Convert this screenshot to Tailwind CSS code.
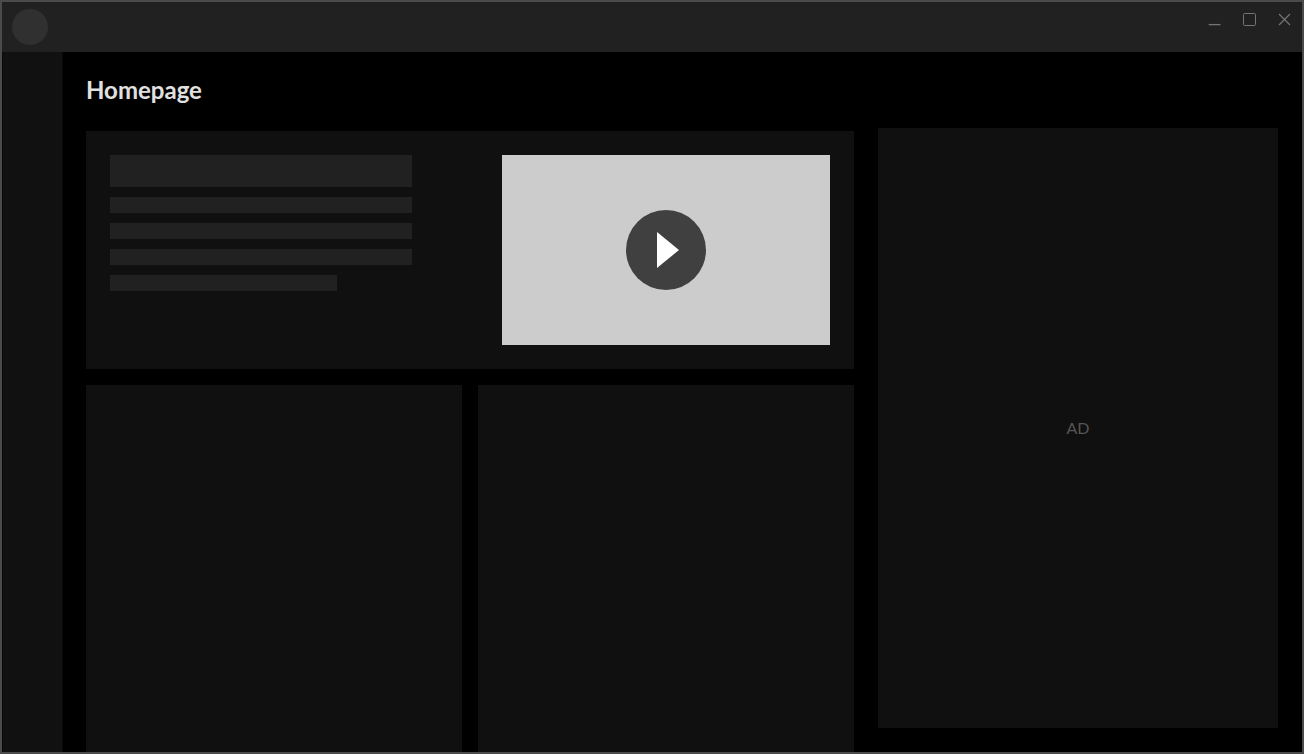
<!DOCTYPE html>
<html lang="en">
<head>
  <meta charset="UTF-8">
  <meta name="viewport" content="width=device-width, initial-scale=1.0">
  <title>Homepage</title>
  <script src="https://cdn.jsdelivr.net/npm/@tailwindcss/browser@4"></script>
</head>
<body class="bg-black font-['Lato',sans-serif]">

  <div class="flex h-screen flex-col overflow-hidden border-2 border-[#4b4b4b]">

    <!-- Title bar -->
    <header class="flex h-[50px] shrink-0 items-start justify-between bg-[#212121] pl-[10px] pt-[7px] pr-2">
      <button aria-label="Profile" class="size-9 rounded-full bg-[#303030]"></button>
      <div class="flex gap-[15px] text-[#757575]">
        <button aria-label="Minimize" class="size-5">
          <svg class="size-5" viewBox="0 0 20 20" fill="none" stroke="currentColor" stroke-width="1.3"><path d="M4.7 15.6h11.8"/></svg>
        </button>
        <button aria-label="Maximize" class="size-5">
          <svg class="size-5" viewBox="0 0 20 20" fill="none" stroke="currentColor"><rect x="4.5" y="4.5" width="12" height="12" rx="1"/></svg>
        </button>
        <button aria-label="Close" class="size-5">
          <svg class="size-5" viewBox="0 0 20 20" fill="none" stroke="currentColor" stroke-width="1.2"><path d="M5 5l11 11M16 5L5 16"/></svg>
        </button>
      </div>
    </header>

    <div class="flex min-h-0 flex-1">
      <!-- Sidebar -->
      <aside class="w-[61px] shrink-0 border-x border-[#090909] bg-[#111111]"></aside>

      <main class="flex min-w-0 flex-1 flex-col pl-[23px] pr-6 pt-6">
        <h1 class="text-2xl leading-7 font-bold text-[#e0e0e0]">Homepage</h1>

        <div class="mt-6 flex min-h-0 flex-1 gap-6">
          <div class="flex min-w-0 flex-1 flex-col gap-4 pt-[3px]">
            <!-- Featured video -->
            <section class="flex justify-between bg-[#101010] p-6">
              <div class="flex w-[302px] flex-col gap-[10px]">
                <div class="h-8 bg-[#212121]"></div>
                <div class="h-4 bg-[#212121]"></div>
                <div class="h-4 bg-[#212121]"></div>
                <div class="h-4 bg-[#212121]"></div>
                <div class="h-4 w-3/4 bg-[#212121]"></div>
              </div>
              <div class="flex h-[190px] w-[328px] items-center justify-center bg-[#cccccc]">
                <button aria-label="Play" class="size-20 rounded-full bg-[#404040]">
                  <svg class="size-20" viewBox="0 0 80 80" fill="white"><path d="M31 22v36l22-18z"/></svg>
                </button>
              </div>
            </section>

            <!-- Cards -->
            <div class="grid flex-1 grid-cols-2 gap-4">
              <div class="bg-[#101010]"></div>
              <div class="bg-[#101010]"></div>
            </div>
          </div>

          <!-- Ad -->
          <aside class="flex h-[600px] w-[400px] shrink-0 items-center justify-center bg-[#101010] text-base text-[#565656]">AD</aside>
        </div>
      </main>
    </div>
  </div>

</body>
</html>
